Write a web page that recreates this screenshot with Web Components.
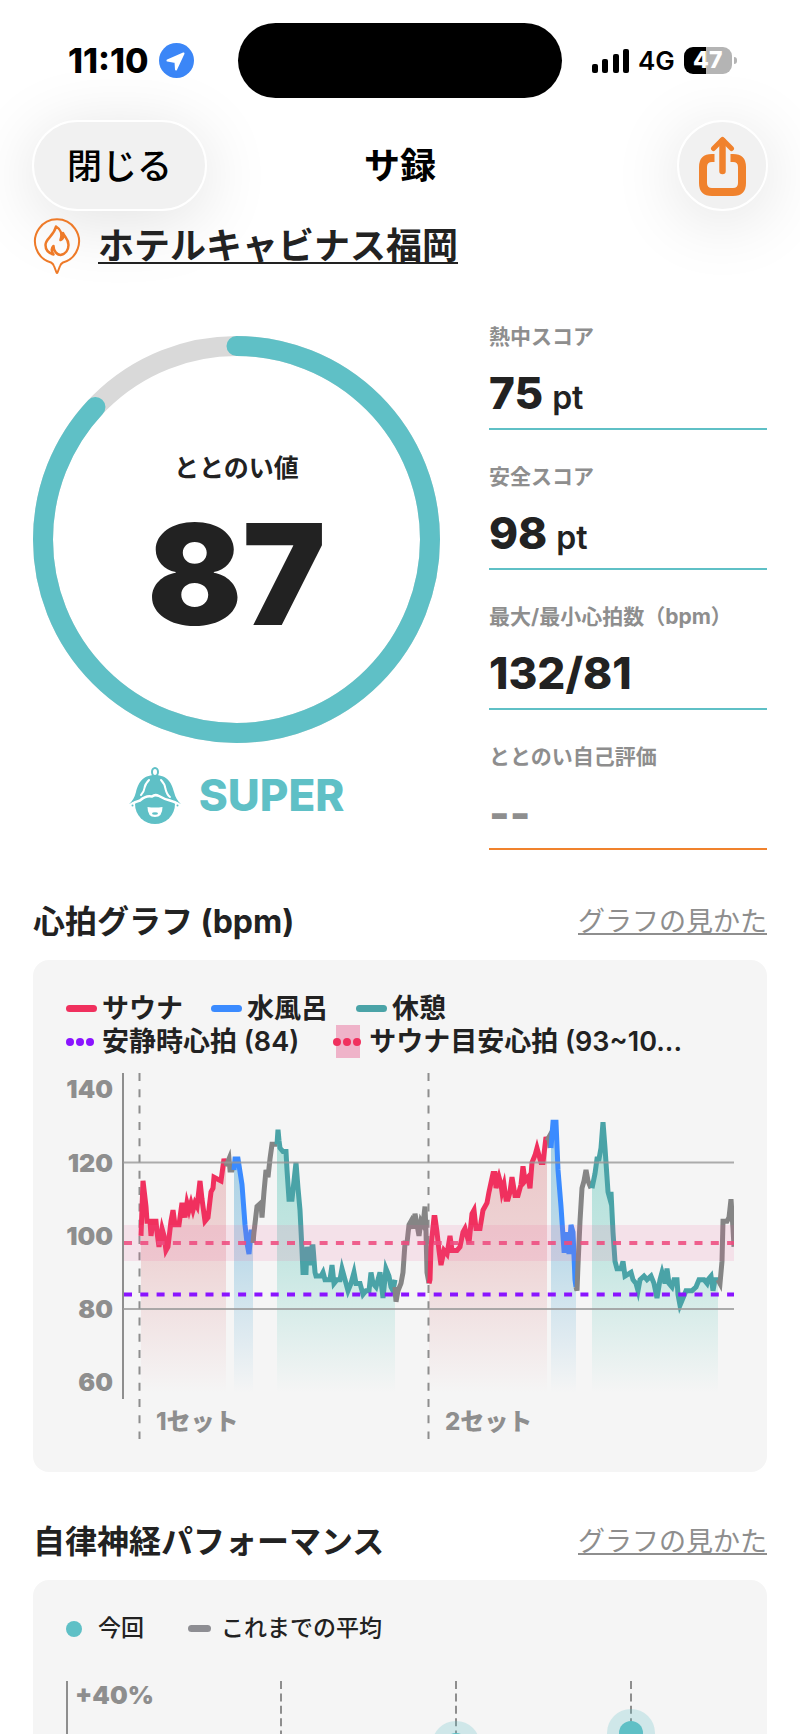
<!DOCTYPE html>
<html lang="ja">
<head>
<meta charset="utf-8">
<meta name="viewport" content="width=device-width, initial-scale=1">
<title>サ録</title>
<style>
  html, body { margin: 0; height: 100%; }
  body {
    background: #fff;
    color: #222;
    font-family: Inter, "Noto Sans CJK JP", sans-serif;
    --teal: #5fc0c6;
    --orange: #f0822d;
    --grey: #8e8e8e;
    --side: 33px;
  }
</style>
</head>
<body>

<sauna-log>
  <status-bar slot="top"></status-bar>
  <nav-bar slot="top">サ録</nav-bar>

  <venue-link>ホテルキャビナス福岡</venue-link>

  <score-board>
    <score-ring slot="ring" value="87" rank="SUPER">ととのい値</score-ring>
    <score-item label="熱中スコア" unit="pt">75</score-item>
    <score-item label="安全スコア" unit="pt">98</score-item>
    <score-item label="最大/最小心拍数（bpm）">132/81</score-item>
    <score-item label="ととのい自己評価" empty>--</score-item>
  </score-board>

  <chart-section heading="心拍グラフ (bpm)">
    <chart-legend>
      <legend-item color="#f0305e">サウナ</legend-item>
      <legend-item color="#3b8bff">水風呂</legend-item>
      <legend-item color="#4aa3a7">休憩</legend-item>
    </chart-legend>
    <chart-legend size="wide">
      <legend-item type="dots" color="#8a14ff">安静時心拍 (84)</legend-item>
      <legend-item type="dots" color="#f0305e" band>サウナ目安心拍 (93~10...</legend-item>
    </chart-legend>
    <heart-chart></heart-chart>
  </chart-section>

  <chart-section heading="自律神経パフォーマンス" open-end>
    <chart-legend size="small">
      <legend-item type="point" color="#5fc0c6">今回</legend-item>
      <legend-item type="short" color="#8e8e93">これまでの平均</legend-item>
    </chart-legend>
    <nerve-chart></nerve-chart>
  </chart-section>
</sauna-log>

<script>
(function() {

// attach an open shadow root filled from a html string
function shadow(el, html) {
  const tmpl = document.createElement('template');
  tmpl.innerHTML = html;
  const root = el.attachShadow({mode: 'open'});
  root.appendChild(tmpl.content.cloneNode(true));
  return root;
}

customElements.define('sauna-log', class extends HTMLElement {
  constructor() {
    super();
    shadow(this, `
<style>
  :host { display: flex; flex-direction: column; height: 100vh; overflow: hidden; }
  main { flex: 1; min-height: 0; display: flex; flex-direction: column; padding: 7px var(--side) 0; }
</style>
<header><slot name="top"></slot></header>
<main><slot></slot></main>`);
  }
});

customElements.define('status-bar', class extends HTMLElement {
  constructor() {
    super();
    shadow(this, `
<style>
  :host { display: grid; grid-template-columns: 1fr 324px 1fr; padding-top: 23px; color: #000; }
  .left, .right { display: flex; align-items: center; height: 75px; }
  .left { padding-left: 68px; gap: 10px; }
  .right { padding-left: 30px; gap: 9px; }
  .time { font-size: 34px; font-weight: 800; }
  .net { font-size: 26px; font-weight: 600; }
  .island { background: #000; border-radius: 38px; }
  .battery { display: flex; align-items: center; gap: 2px; }
  .cell {
    width: 48px; height: 27px; border-radius: 9px; text-align: center;
    background: linear-gradient(90deg, #000 46%, #b4b4b4 46%);
    color: #fff; font-size: 23px; line-height: 27px; font-weight: 800;
  }
  .tip { width: 3px; height: 7px; border-radius: 0 3px 3px 0; background: #b4b4b4; }
</style>
<div class="left">
  <span class="time">11:10</span>
  <svg width="35" height="35" viewBox="0 0 35 35"><circle cx="17.5" cy="17.5" r="17.5" fill="#3b86f7"/><path d="M24.500 10.500 L8.500 17.500 L16.500 19 L17 26.500 Z" fill="#fff" stroke="#fff" stroke-width="2" stroke-linejoin="round"/></svg>
</div>
<div class="island"></div>
<div class="right">
  <svg width="37" height="24" viewBox="0 0 37 24"><rect y="15" width="6" height="9" rx="2"/><rect x="10" y="10" width="6" height="14" rx="2"/><rect x="21" y="5" width="6" height="19" rx="2"/><rect x="31" width="6" height="24" rx="2"/></svg>
  <span class="net">4G</span>
  <div class="battery"><div class="cell">47</div><div class="tip"></div></div>
</div>`);
  }
});

customElements.define('nav-bar', class extends HTMLElement {
  constructor() {
    super();
    shadow(this, `
<style>
  :host { display: grid; grid-template-columns: 1fr auto 1fr; align-items: center; padding: 22px 32px 0; color: #000; }
  h1 { margin: 0; font-size: 36px; line-height: 48px; font-weight: 700; }
  button {
    height: 91px; box-sizing: border-box; border: 2px solid #fff; border-radius: 46px; padding: 0 33px;
    background: #f1f1f1; color: #000; font: 500 35px/48px Inter, "Noto Sans CJK JP", sans-serif;
    box-shadow: 0 10px 70px rgba(0, 0, 0, .12);
  }
  .close { justify-self: start; }
  .share { justify-self: end; width: 91px; padding: 0; display: grid; place-items: center; }
</style>
<button class="close" type="button">閉じる</button>
<h1><slot></slot></h1>
<button class="share" type="button" aria-label="共有">
  <svg width="47" height="60" viewBox="0 0 47 60" fill="none" stroke="#f0822d">
    <path d="M15.500 22 H13 Q4 22 4 31 V47 Q4 56 13 56 H34 Q43 56 43 47 V31 Q43 22 34 22 H31.500" stroke-width="8"/>
    <path d="M23.500 5 V35" stroke-width="6.500" stroke-linecap="round"/>
    <path d="M14.500 12.500 L23.500 3.500 L32.500 12.500" stroke-width="5" stroke-linecap="round" stroke-linejoin="round"/>
  </svg>
</button>`);
  }
});

customElements.define('venue-link', class extends HTMLElement {
  constructor() {
    super();
    shadow(this, `
<style>
  :host { display: flex; align-items: center; gap: 17px; height: 56px; }
  a { color: #222; font-size: 36px; line-height: 54px; font-weight: 700; text-decoration: underline; text-decoration-thickness: 2px; text-underline-offset: 3px; text-decoration-skip-ink: none; }
</style>
<svg width="48" height="56" viewBox="0 0 48 56" fill="none" stroke="#ee7a28" stroke-width="2" stroke-linejoin="round" stroke-linecap="round">
  <path d="M18 44.500 A22 22 0 1 1 30 44.500 C28 45.500 27.500 46.500 27 48 L24.500 54.500 Q24 55.500 23.500 54.500 L21 48 C20.500 46.500 20 45.500 18 44.500 Z"/>
  <path d="M23 8.500 C27.500 11 29.500 16 27.500 22 C30 21 31 18.500 30 15 C31.500 19 35.500 21 35.500 27 C35.500 32 32.500 36 27.500 37 C24 37 20.500 33 20.500 28 C18.500 30 18 33 20.500 36.500 C15 35 12.500 31 12.500 27 C12.500 20 20.500 19 23 8.500 Z" stroke-width="2.500"/>
</svg>
<a href="#"><slot></slot></a>`);
  }
});

customElements.define('score-board', class extends HTMLElement {
  constructor() {
    super();
    shadow(this, `
<style>
  :host { display: grid; grid-template-columns: 407fr 278fr; column-gap: 49px; padding: 16px 0 2px; }
  .ring { padding-top: 46px; }
  .items { display: flex; flex-direction: column; }
</style>
<div class="ring"><slot name="ring"></slot></div>
<div class="items"><slot></slot></div>`);
  }
});

customElements.define('score-ring', class extends HTMLElement {
  constructor() {
    super();
    const value = Number(this.getAttribute('value'));
    shadow(this, `
<style>
  :host { display: block; }
  .dial { display: grid; }
  .dial > * { grid-area: 1 / 1; }
  .dial svg { display: block; width: 100%; }
  .text { display: flex; flex-direction: column; align-items: center; justify-content: center; gap: 20px; padding-top: 16px; }
  .label { font-size: 25px; line-height: 32px; font-weight: 700; }
  .value { font-size: 140px; line-height: 140px; font-weight: 900; }
  .rank { display: flex; align-items: center; justify-content: center; gap: 18px; padding-top: 24px; color: var(--teal); font-size: 44px; line-height: 57px; font-weight: 800; }
</style>
<div class="dial">
  <svg viewBox="0 0 407 407" fill="none" stroke-width="20">
    <circle cx="203.500" cy="203.500" r="193.500" stroke="#d9d9d9"/>
    <circle cx="203.500" cy="203.500" r="193.500" stroke="#5fc0c6" stroke-linecap="round" pathLength="100" stroke-dasharray="${value} 100" transform="rotate(-90 203.500 203.500)"/>
  </svg>
  <div class="text"><span class="label"><slot></slot></span><span class="value">${value}</span></div>
</div>
<div class="rank">
  <svg width="52" height="57" viewBox="0 0 52 57">
    <ellipse cx="26" cy="5" rx="3" ry="4" fill="none" stroke="#5fc0c6" stroke-width="2"/>
    <circle cx="26" cy="37" r="20" fill="#5fc0c6"/>
    <path d="M26 8 C13 8 9 17 7 25 Q5 33 0 37 L10 32 Q18 27 26 28.500 Q34 27 42 32 L52 37 Q47 33 45 25 C43 17 39 8 26 8 Z" fill="#5fc0c6"/>
    <path d="M3 37 Q7 34.500 11 33.500 Q17 28 23 29.500 Q26 27 30 29 Q35 32 41 33.500 Q45 34.500 49 37" fill="none" stroke="#fff" stroke-width="2.500"/>
    <path d="M20 13 Q16 17 15.500 21 Q15 25 12 28" fill="none" stroke="#fff" stroke-width="2" stroke-linecap="round"/>
    <path d="M32 13 Q36 17 36.500 22 Q38 28 41 30" fill="none" stroke="#fff" stroke-width="2" stroke-linecap="round"/>
    <path d="M18.500 40 Q26 41 33.500 40 Q33.500 50 26 50 Q18.500 50 18.500 40 Z" fill="#fff"/>
    <ellipse cx="26" cy="46.500" rx="3" ry="1.200" fill="#5fc0c6"/>
    <circle cx="3.500" cy="38.500" r="1" fill="#5fc0c6"/><circle cx="48.500" cy="38.500" r="1" fill="#5fc0c6"/>
  </svg>
  <span>${this.getAttribute('rank')}</span>
</div>`);
  }
});

customElements.define('score-item', class extends HTMLElement {
  constructor() {
    super();
    const unit = this.getAttribute('unit');
    shadow(this, `
<style>
  :host { display: flex; flex-direction: column; gap: 19px; padding: 35px 0 8px; border-bottom: 2px solid var(--teal); }
  :host([empty]) { border-color: var(--orange); }
  .label { color: var(--grey); font-size: 21px; line-height: 24px; height: 24px; font-weight: 700; white-space: nowrap; }
  .value { display: flex; align-items: baseline; gap: 9px; height: 52px; font-size: 44px; line-height: 50px; font-weight: 800; }
  :host([empty]) .value { color: var(--grey); }
  .unit { font-size: 32px; font-weight: 600; }
</style>
<div class="label">${this.getAttribute('label')}</div>
<div class="value"><span><slot></slot></span>${unit ? `<span class="unit">${unit}</span>` : ''}</div>`);
  }
});

customElements.define('chart-section', class extends HTMLElement {
  constructor() {
    super();
    shadow(this, `
<style>
  :host { display: block; padding-top: 50px; }
  .head { display: flex; align-items: center; justify-content: space-between; padding-bottom: 18px; }
  h2 { margin: 0; font-size: 32px; line-height: 40px; font-weight: 700; }
  a { color: var(--grey); font-size: 27px; line-height: 40px; font-weight: 400; text-underline-offset: 2px; text-decoration-thickness: 2px; text-decoration-skip-ink: none; }
  .card { background: #f5f5f5; border-radius: 16px; padding: 32px 33px 33px; }
  :host([open-end]) { flex: 1; display: flex; flex-direction: column; min-height: 0; }
  :host([open-end]) .card { flex: 1; border-radius: 16px 16px 0 0; padding-bottom: 0; overflow: hidden; min-height: 0; }
</style>
<div class="head"><h2>${this.getAttribute('heading')}</h2><a href="#">グラフの見かた</a></div>
<div class="card"><slot></slot></div>`);
  }
});

customElements.define('chart-legend', class extends HTMLElement {
  constructor() {
    super();
    shadow(this, `
<style>
  :host { display: flex; gap: 28px; height: 33px; font-size: 27px; line-height: 33px; font-weight: 600; white-space: nowrap; }
  :host([size=wide]) { gap: 34px; }
  :host([size=small]) { gap: 44px; font-size: 23px; font-weight: 500; }
</style>
<slot></slot>`);
  }
});

customElements.define('legend-item', class extends HTMLElement {
  constructor() {
    super();
    const color = this.getAttribute('color');
    const marks = {
      line: [31, `<rect y="13" width="31" height="7" rx="3.500"/>`],
      short: [23, `<rect y="13" width="23" height="7" rx="3.500"/>`],
      point: [16, `<circle cx="8" cy="17" r="8"/>`],
      dots: [31, `<circle cx="4" cy="17" r="4"/><circle cx="14" cy="17" r="4"/><circle cx="24" cy="17" r="4"/>`]
    };
    const [width, mark] = marks[this.getAttribute('type') || 'line'];
    const band = this.hasAttribute('band') ? '<rect x="3" width="24" height="33" fill="#efb3c9"/>' : '';
    shadow(this, `
<style>
  :host { display: flex; align-items: center; gap: 5px; }
  :host([type=point]) { gap: 16px; }
  :host([type=short]) { gap: 10px; }
</style>
<svg width="${width}" height="33" viewBox="0 0 ${width} 33" fill="${color}">${band}${mark}</svg>
<span><slot></slot></span>`);
  }
});

// heart rate samples: x position in the plot, bpm
const PHASES = [
  ['sauna', '75,100 77,115 80,108 81,104 84,104 85,100 87,104 90,104 91,101 93,97 96,102 98,100 100,96 102,97 105,104 107,107 109,103 113,103 116,109 119,105 121,109 123,107 125,109 127,107 129,109 131,108 134,115 136,110 139,104 142,105 145,112 147,113 148,116 155,115 158,121 160,119'],
  ['move', '160,119 163,121 164,118 166,118 168,120'],
  ['water', '168,118 169,121 172,121 176,114 179,103 181,98 183,95 185,101 187,101 187,98'],
  ['move', '187,98 188,101 191,108 195,109 196,105 198,112 200,118 202,116 204,121 206,125 211,125'],
  ['rest', '211,125 212,129 213,126 214,124 217,123 220,123 221,118 223,110 226,110 230,120 232,113 234,107 236,96 237,90 240,90 241,97 244,92 246,97 247,97 249,90 250,89 255,89 257,90 259,88 264,88 266,92 268,87 271,88 274,88 276,91 279,88 282,85 285,87 288,90 290,87 294,87 297,84 300,85 303,85 305,90 307,87 310,86 314,90 317,83 320,91 323,89 325,86 327,85 329,88'],
  ['move', '329,86 330,82 332,85 335,87 337,90 339,98 341,98 343,103 345,104 347,102 349,106 351,103 353,100 355,104 357,103 359,108 360,101 361,90 363,87'],
  ['sauna', '363,87 364,88 365,97 368,105 369,105 371,101 373,96 375,92 378,96 381,95 384,100 386,96 391,96 394,97 397,101 399,102 403,98 406,106 408,107 410,102 414,102 417,107 421,109 423,112 427,117 429,117 430,113 433,116 435,114 436,112 438,114 440,110 442,110 444,112 446,116 449,111 452,111 455,114 457,119 459,115 462,116 464,113 466,120 469,122 471,124 473,122 475,120 477,120 480,127 481,126'],
  ['move', '481,126 483,127 484,124'],
  ['water', '485,124 487,131 490,131 492,118 495,108 498,96 500,96 501,101 503,95 505,103 507,101 509,88 510,86'],
  ['move', '510,86 511,85 512,92 514,104 516,113 518,115 520,118 522,115 525,113'],
  ['rest', '526,113 529,117 531,121 533,121 535,124 537,131 539,124 542,112 544,110 545,112 547,101 549,93 551,91 555,91 557,93 559,89 565,90 567,88 570,87 572,85 574,88 578,89 581,88 585,89 588,87 591,83 594,88 596,90 599,87 601,91 603,87 606,86 608,88 611,88 612,84 614,81 617,83 620,85 626,85 630,86 633,88 638,88 641,87 642,88 645,89 647,85 649,88 652,88'],
  ['move', '652,88 654,87 656,93 657,104 661,104 663,105 665,110 667,102 668,97']
];
const LINE = { sauna: '#f0305e', water: '#3b8bff', rest: '#4aa3a7', move: '#858585' };
const bpmY = bpm => Math.round((16.400 + (140 - bpm) * 3.660) * 10) / 10;

customElements.define('heart-chart', class extends HTMLElement {
  constructor() {
    super();
    let fills = '', lines = '';
    PHASES.forEach(([kind, data]) => {
      const pts = data.split(' ').map(p => p.split(',').map(Number)).map(([x, b]) => [x, bpmY(b)]);
      const path = pts.map(p => p.join(' ')).join(' L');
      if (kind !== 'move') {
        fills += `<path d="M${pts[0][0]} 320 L${path} V320 Z" fill="url(#${kind})"/>`;
      }
      lines += `<path d="M${path}" stroke="${LINE[kind]}"/>`;
    });
    const grad = (id, color, top) => `<linearGradient id="${id}" gradientUnits="userSpaceOnUse" x1="0" y1="60" x2="0" y2="320"><stop stop-color="${color}" stop-opacity="${top}"/><stop offset=".5" stop-color="${color}" stop-opacity="${top * .65}"/><stop offset="1" stop-color="${color}" stop-opacity="0"/></linearGradient>`;
    const ticks = [140, 120, 100, 80, 60].map(b => `<text x="47" y="${bpmY(b) + 9}" text-anchor="end">${b}</text>`).join('');
    shadow(this, `
<style>
  :host { display: block; padding-top: 15px; }
  svg { display: block; width: 100%; }
  text { font-size: 25px; font-weight: 900; fill: #8e8e8e; }
  .set { font-size: 24px; font-weight: 800; }
</style>
<svg viewBox="0 0 668 366">
  <defs>${grad('sauna', '#d04a50', .28)}${grad('water', '#2692c8', .38)}${grad('rest', '#2fb8a6', .36)}</defs>
  ${fills}
  <g stroke="#8e8e8e" stroke-width="2" stroke-dasharray="8 8.300"><path d="M73.500 0 V366"/><path d="M362.500 0 V366"/></g>
  <g fill="none" stroke-width="5" stroke-miterlimit="5">${lines}</g>
  <rect x="58" y="152" width="610" height="36" fill="#f0609a" fill-opacity=".13"/>
  <path d="M57 0 V326" stroke="#8e8e8e" stroke-width="2"/>
  <path d="M57 89.600 H668 M57 236 H668" stroke="#999" stroke-opacity=".8" stroke-width="2"/>
  <path d="M58 170 H668" stroke="#ee4c80" stroke-opacity=".88" stroke-width="4" stroke-dasharray="8 8.300"/>
  <path d="M58 221.500 H668" stroke="#8a14ff" stroke-width="4" stroke-dasharray="8 8.300"/>
  ${ticks}
  <text class="set" x="90" y="357">1セット</text>
  <text class="set" x="379" y="357">2セット</text>
</svg>`);
  }
});

customElements.define('nerve-chart', class extends HTMLElement {
  constructor() {
    super();
    const columns = [215, 390, 565].map(x => `<path d="M${x} 0 V320" stroke-dasharray="8 4.400"/>`).join('');
    const points = [[390, 64], [565, 52]].map(([x, y]) => `<circle cx="${x}" cy="${y}" r="24" fill="#5fc0c6" fill-opacity=".25"/><circle cx="${x}" cy="${y}" r="12" fill="#5fc0c6"/>`).join('');
    shadow(this, `
<style>
  :host { display: block; padding-top: 36px; }
  svg { display: block; width: 100%; }
  text { font-size: 25px; font-weight: 900; fill: #8e8e8e; }
</style>
<svg viewBox="0 0 668 320">
  <g stroke="#8e8e8e" stroke-width="2"><path d="M1 0 V320"/>${columns}</g>
  ${points}
  <text x="9" y="23">+40%</text>
</svg>`);
  }
});

})();
</script>
</body>
</html>
